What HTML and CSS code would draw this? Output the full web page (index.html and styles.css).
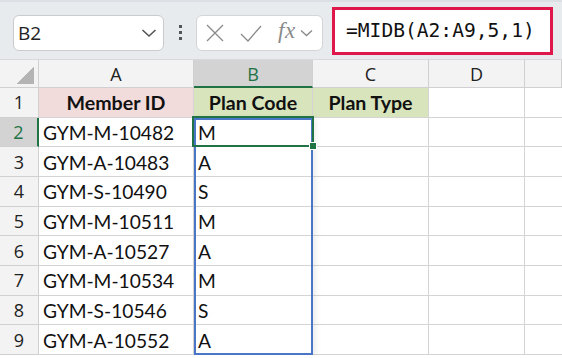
FILE: index.html
```html
<!DOCTYPE html>
<html>
<head>
    <title>MIDB Plan Code</title>
    <link rel="stylesheet" href="styles.css">
</head>
<body>
    <div class="toolbar">
        <div class="name-box">
            <span class="name-text">B2</span>
            <svg class="chevron" width="16" height="10" viewBox="0 0 16 10"><path d="M1.5 2 L8 8 L14.5 2" fill="none" stroke="#555" stroke-width="1.6"/></svg>
        </div>
        <div class="dots"><span></span><span></span><span></span></div>
        <div class="func-box">
            <svg width="20" height="20" viewBox="0 0 20 20"><path d="M2 2 L18 18 M18 2 L2 18" stroke="#8a8a8a" stroke-width="1.3" fill="none"/></svg>
            <svg width="22" height="20" viewBox="0 0 22 20"><path d="M1 11 L8 18 L21 3" stroke="#8a8a8a" stroke-width="1.3" fill="none"/></svg>
            <span class="fx">fx</span>
            <svg width="13" height="8" viewBox="0 0 13 8"><path d="M1 1.5 L6.5 6.5 L12 1.5" fill="none" stroke="#8a8a8a" stroke-width="1.3"/></svg>
        </div>
        <div class="formula-box">=MIDB(A2:A9,5,1)</div>
    </div>

    <div class="sheet">
        <div class="corner"><div class="corner-tri"></div></div>
        <div class="col-head">A</div>
        <div class="col-head active">B</div>
        <div class="col-head">C</div>
        <div class="col-head">D</div>
        <div class="col-head last"></div>

        <div class="row-head">1</div>
        <div class="cell head pink">Member ID</div>
        <div class="cell head green">Plan Code</div>
        <div class="cell head green">Plan Type</div>
        <div class="cell"></div>
        <div class="cell last"></div>

        <div class="row-head active">2</div>
        <div class="cell">GYM-M-10482</div>
        <div class="cell">M</div>
        <div class="cell"></div>
        <div class="cell"></div>
        <div class="cell last"></div>

        <div class="row-head">3</div>
        <div class="cell">GYM-A-10483</div>
        <div class="cell">A</div>
        <div class="cell"></div>
        <div class="cell"></div>
        <div class="cell last"></div>

        <div class="row-head">4</div>
        <div class="cell">GYM-S-10490</div>
        <div class="cell">S</div>
        <div class="cell"></div>
        <div class="cell"></div>
        <div class="cell last"></div>

        <div class="row-head">5</div>
        <div class="cell">GYM-M-10511</div>
        <div class="cell">M</div>
        <div class="cell"></div>
        <div class="cell"></div>
        <div class="cell last"></div>

        <div class="row-head">6</div>
        <div class="cell">GYM-A-10527</div>
        <div class="cell">A</div>
        <div class="cell"></div>
        <div class="cell"></div>
        <div class="cell last"></div>

        <div class="row-head">7</div>
        <div class="cell">GYM-M-10534</div>
        <div class="cell">M</div>
        <div class="cell"></div>
        <div class="cell"></div>
        <div class="cell last"></div>

        <div class="row-head">8</div>
        <div class="cell">GYM-S-10546</div>
        <div class="cell">S</div>
        <div class="cell"></div>
        <div class="cell"></div>
        <div class="cell last"></div>

        <div class="row-head">9</div>
        <div class="cell">GYM-A-10552</div>
        <div class="cell">A</div>
        <div class="cell"></div>
        <div class="cell"></div>
        <div class="cell last"></div>

        <!-- highlighted range and active cell, laid over the grid -->
        <div class="range"></div>
        <div class="selected"><span class="handle"></span></div>
    </div>
</body>
</html>
```

FILE: styles.css
```css
* {
    box-sizing: border-box;
}

body {
    margin: 0;
    background-color: #fff;
    font-family: "Open Sans", Arial, sans-serif;
    overflow: hidden;
}

.toolbar {
    height: 60px;
    background-color: #e8ebee;
    border-top: 2px solid #dcdfe3;
    border-bottom: 1px solid #d7d9dc;
    display: flex;
    align-items: center;
    padding: 0 0 0 13px;
}

.name-box {
    width: 151px;
    height: 36px;
    margin-top: 4px;
    background-color: #fff;
    border: 1px solid #c9cbce;
    border-radius: 6px;
    display: flex;
    align-items: center;
    justify-content: space-between;
    padding: 0 6px 0 4px;
}

.name-text {
    font-family: "Open Sans", sans-serif;
    font-size: 19px;
    color: #222;
}

.dots {
    width: 32px;
    margin-top: 4px;
    display: flex;
    flex-direction: column;
    align-items: center;
    gap: 3px;
}

.dots span {
    width: 3px;
    height: 3px;
    background-color: #555;
}

.func-box {
    width: 127px;
    height: 36px;
    margin-top: 4px;
    background-color: #fff;
    border: 1px solid #d3d5d8;
    border-radius: 6px;
    display: flex;
    align-items: center;
    gap: 12px;
    padding: 0 0 0 8px;
}

.func-box svg:first-child {
    margin-right: 3px;
}

.fx {
    font-family: "Liberation Serif", serif;
    font-style: italic;
    font-size: 23px;
    color: #8a8a8a;
    margin: -4px -8px 0 4px;
    letter-spacing: 0.5px;
}

.formula-box {
    width: 221px;
    height: 48px;
    margin-left: 9px;
    background-color: #fff;
    border: 3px solid #e0174a;
    font-family: "DejaVu Sans Mono", monospace;
    font-size: 19.6px;
    color: #111;
    padding: 9px 0 0 11px;
}

.sheet {
    position: relative;
    display: grid;
    grid-template-columns: 39px 155px 119px 116px 96px 1fr;
    grid-template-rows: 28px repeat(9, 29.67px);
}

.corner {
    background-color: #f3f3f3;
    border-right: 1px solid #d0d0d0;
    border-bottom: 1px solid #d0d0d0;
    display: flex;
    align-items: flex-end;
    justify-content: flex-end;
    padding: 0 4px 3px 0;
}

.corner-tri {
    width: 18px;
    height: 18px;
    background: linear-gradient(135deg, transparent 50%, #b4b4b4 50%);
}

.col-head,
.row-head {
    background-color: #f3f3f3;
    border-right: 1px solid #d0d0d0;
    border-bottom: 1px solid #d0d0d0;
    display: flex;
    align-items: center;
    justify-content: center;
    font-family: "Open Sans", sans-serif;
    font-size: 18px;
    color: #222;
}

.col-head {
    padding-top: 1px;
}

.col-head.active {
    background-color: #d3d3d3;
    color: #217346;
    border-bottom: 2px solid #217346;
}

.row-head.active {
    background-color: #d3d3d3;
    color: #217346;
    border-right: 2px solid #217346;
}

.cell {
    border-right: 1px solid #d4d4d4;
    border-bottom: 1px solid #d4d4d4;
    font-family: Lato, sans-serif;
    font-size: 19.2px;
    color: #111;
    display: flex;
    align-items: center;
    padding: 1px 0 0 4px;
    white-space: nowrap;
}

.cell.last {
    border-right: none;
}

.cell.head {
    justify-content: center;
    font-weight: bold;
    font-size: 19.6px;
    padding-left: 0;
}

.pink {
    background-color: #f2dcdb;
}

.green {
    background-color: #d8e4bc;
}

.range,
.selected {
    position: absolute;
    grid-column: 3 / 4;
    pointer-events: none;
}

.range {
    grid-row: 3 / 11;
    top: 0;
    bottom: 0;
    left: 0;
    right: 0;
    border: 2px solid #4a76c8;
    box-shadow: 3px 0 6px rgba(0, 0, 0, 0.08);
}

.selected {
    grid-row: 3 / 4;
    top: -2px;
    bottom: 0;
    left: -2px;
    right: -1px;
    border: 2px solid #217346;
}

.handle {
    position: absolute;
    right: -5px;
    bottom: -5px;
    width: 8px;
    height: 8px;
    background-color: #217346;
    border: 1px solid #fff;
}
```
